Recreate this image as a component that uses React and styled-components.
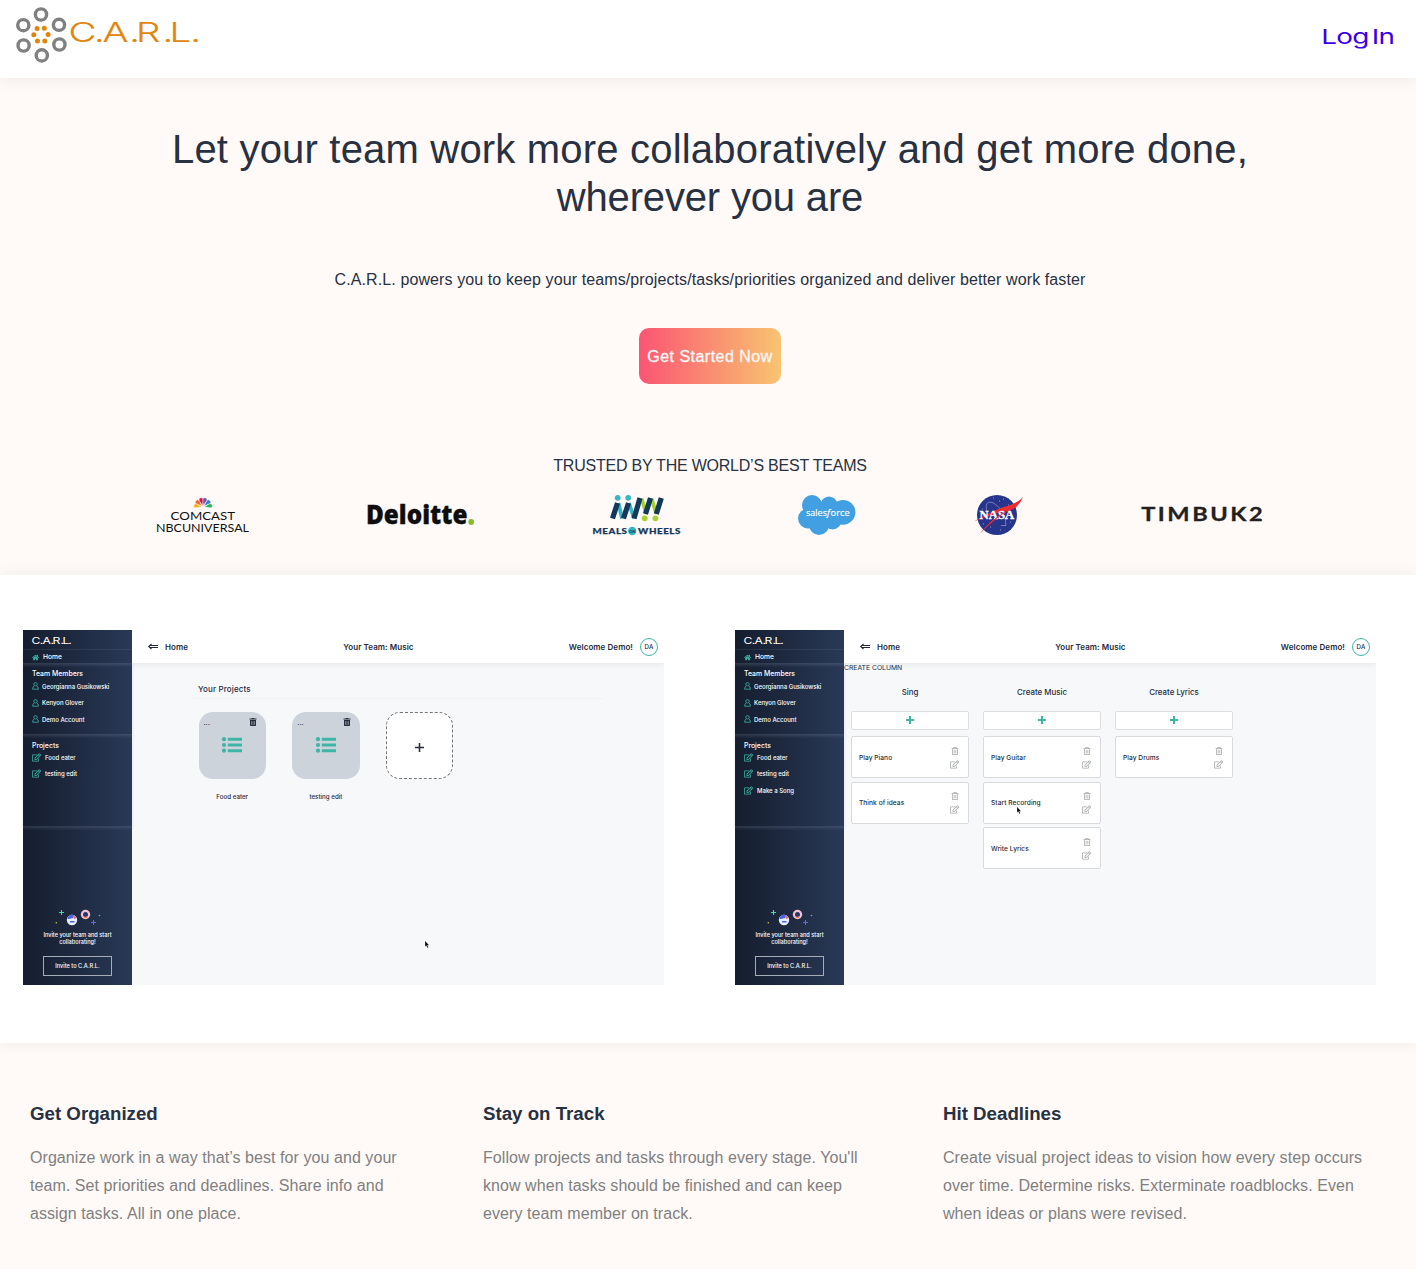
import React from 'react';
import styled, { createGlobalStyle } from 'styled-components';
import { FaHome, FaTrashAlt, FaRegTrashAlt, FaRegEdit } from 'react-icons/fa';

const Global = createGlobalStyle`
  *, *::before, *::after { box-sizing: border-box; }
  body { margin: 0; background: #fffaf8; font-family: "Liberation Sans", Arial, sans-serif; color: #273142; }
  h1, h2, h3, p { margin: 0; font-weight: 400; }
  svg { overflow: visible; }
`;

const teal = '#3eb5a6';

const Page = styled.div`
  height: 1269px;
  overflow: hidden;
`;

const Header = styled.header`
  position: relative;
  z-index: 1;
  height: 78px;
  display: flex;
  justify-content: space-between;
  background: #fff;
  box-shadow: 0 2px 15px rgba(60, 40, 40, 0.08);
`;

const LoginLink = styled.a`
  padding: 22px 20px 0 0;
  color: #3c00e6;
`;

const Hero = styled.section`
  height: 497px;
  padding-top: 47px;
  text-align: center;
  background: #fffaf8;
`;

const Headline = styled.h1`
  padding-left: 4px;
  font-size: 40px;
  line-height: 48px;
  white-space: nowrap;
`;

const HeadlineRow = styled.span`
  display: block;
  letter-spacing: ${(p) => p.$tracking}px;
`;

const Lead = styled.p`
  margin-top: 49px;
  padding-left: 4px;
  font-size: 16px;
  line-height: 20px;
  letter-spacing: 0.105px;
`;

const CallToAction = styled.button`
  display: block;
  width: 142px;
  height: 56px;
  margin: 38px auto 0;
  position: relative;
  left: 2px;
  padding: 2px 0 0;
  border: 0;
  border-radius: 10px;
  background: linear-gradient(90deg, #fb5572, #f8c471);
  color: #faf6f6;
  font: 16px "Liberation Sans", Arial, sans-serif;
  letter-spacing: 0.48px;
  -webkit-text-stroke: 0.35px #faf6f6;
`;

const Trusted = styled.h2`
  margin-top: 72px;
  padding-left: 4px;
  font-size: 16px;
  line-height: 20px;
  letter-spacing: -0.22px;
`;

const Clients = styled.div`
  display: flex;
  justify-content: space-between;
  height: 40px;
  margin: 19px 153px 0 156px;
`;

const Showcase = styled.section`
  position: relative;
  height: 468px;
  padding: 55px 40px 0 23px;
  display: flex;
  justify-content: space-between;
  background: #fff;
  box-shadow: 0 0 14px rgba(60, 50, 50, 0.08);
`;

const Features = styled.section`
  display: grid;
  grid-template-columns: 453px 460px 1fr;
  padding: 60px 0 0 30px;
`;

const FeatureTitle = styled.h3`
  font-size: 18.7px;
  font-weight: 700;
  line-height: 22px;
`;

const FeatureText = styled.p`
  margin-top: 19px;
  font-size: 16px;
  line-height: 28px;
  letter-spacing: 0.065px;
  color: #808080;
  white-space: pre;
`;

/* product preview */

const Window = styled.div`
  position: relative;
  display: flex;
  width: 641px;
  height: 355px;
  font-family: Inter, "Liberation Sans", sans-serif;
  background: #f7f8fa;
`;

const Sidebar = styled.aside`
  width: 109px;
  display: flex;
  flex-direction: column;
  color: #fff;
  background: linear-gradient(90deg, #151e2f, #1e2940 45%, #293956);
`;

const SideBlock = styled.div`
  height: ${(p) => p.$height}px;
  padding: ${(p) => p.$top}px 0 0 9px;
  border-bottom: 1px solid rgba(170, 185, 205, ${(p) => (p.$soft ? 0.08 : 0.14)});
  box-shadow: ${(p) => (p.$soft ? 'none' : '0 1px 3px rgba(150, 165, 190, 0.25)')};
`;

const SideTitle = styled.div`
  font-size: 6.9px;
  font-weight: 500;
  line-height: 9px;
`;

const SideItem = styled.div`
  display: flex;
  align-items: center;
  gap: ${(p) => p.$gap || 4}px;
  height: ${(p) => p.$height || 16.5}px;
  font-size: ${(p) => p.$size || 6}px;
  font-weight: 500;
  white-space: nowrap;
  svg { color: ${teal}; flex: none; }
`;

const ProjectList = styled.div`
  margin-top: -1px;
`;

const Invite = styled.div`
  margin-top: auto;
  padding-bottom: 9px;
  display: flex;
  flex-direction: column;
  align-items: center;
  text-align: center;
  font-size: 5.6px;
  font-weight: 500;
  line-height: 7px;
  white-space: nowrap;
`;

const InviteText = styled.div`
  margin-top: 5px;
`;

const InviteButton = styled.div`
  width: 69px;
  height: 20px;
  margin-top: 10px;
  border: 1px solid #a5acb8;
  line-height: 18px;
`;

const Main = styled.div`
  flex: 1;
  overflow: hidden;
  color: #252c3d;
`;

const TopBar = styled.div`
  height: 33px;
  padding: 0 6px 0 16px;
  display: flex;
  align-items: center;
  justify-content: space-between;
  background: #fff;
  box-shadow: 0 1px 6px rgba(40, 50, 70, 0.1);
  font-size: 8px;
  font-weight: 600;
  letter-spacing: 0.07px;
`;

const TopGroup = styled.div`
  display: flex;
  align-items: center;
  gap: 7px;
`;

const Avatar = styled.div`
  width: 18px;
  height: 18px;
  border: 1px solid ${teal};
  border-radius: 50%;
  text-align: center;
  font-size: 6.2px;
  font-weight: 500;
  line-height: 16px;
`;

const Projects = styled.div`
  margin: 20px 61px 0 61px;
`;

const ProjectsTitle = styled.div`
  height: 16px;
  padding-left: 5px;
  border-bottom: 1px solid #f0f2f4;
  font-size: 8px;
  font-weight: 500;
  line-height: 13px;
  letter-spacing: 0.14px;
`;

const Tiles = styled.div`
  display: flex;
  gap: 26.5px;
  padding: 13px 0 0 5.5px;
`;

const TileColumn = styled.div`
  width: 67.3px;
  text-align: center;
  font-size: 6.2px;
  font-weight: 500;
`;

const Tile = styled.div`
  height: 67.3px;
  margin-bottom: 14px;
  padding: 6px 9px 0 5px;
  border-radius: 14px;
  background: #ccd3da;
`;

const TileTop = styled.div`
  display: flex;
  justify-content: space-between;
  height: 18.5px;
  font-size: 7px;
`;

const TileIcon = styled.svg`
  display: block;
  margin: 0 0 0 18.5px;
`;

const AddTile = styled.div`
  height: 67.3px;
  padding-top: 4px;
  display: grid;
  place-items: center;
  border: 1px dashed #777;
  border-radius: 14px;
  background: #fff;
`;

const CreateColumn = styled.div`
  position: relative;
  height: 9px;
  font-size: 6.8px;
  line-height: 9px;
`;

const Board = styled.div`
  display: flex;
  align-items: flex-start;
  gap: 14px;
  padding: 15px 0 0 7px;
`;

const Column = styled.div`
  width: 118px;
  display: flex;
  flex-direction: column;
  gap: 3.5px;
`;

const ColumnTitle = styled.div`
  height: 20.4px;
  text-align: center;
  font-size: 7.9px;
  font-weight: 500;
  line-height: 10px;
`;

const AddBar = styled.div`
  height: 19px;
  margin-bottom: 3px;
  display: grid;
  place-items: center;
  border: 1px solid #dcdee0;
  border-radius: 2px;
  background: #fff;
`;

const Card = styled.div`
  height: 42px;
  padding: 1px 9px 0 7px;
  display: flex;
  align-items: center;
  justify-content: space-between;
  border: 1px solid #d8dadd;
  border-radius: 2px;
  background: #fff;
  font-size: 6.6px;
  font-weight: 500;
  letter-spacing: 0.05px;
`;

const CardTools = styled.div`
  display: flex;
  flex-direction: column;
  align-items: center;
  gap: 5px;
  color: #a6a9ac;
`;

const Pointer = styled.svg`
  position: absolute;
  left: ${(p) => p.$x}px;
  top: ${(p) => p.$y}px;
`;

const MiniWordmark = styled.svg`
  display: block;
`;

const Cursor = ({ x, y }) => (
  <Pointer $x={x} $y={y} width="6" height="9" viewBox="0 0 6 9">
    <path d="M1 .7v6l1.3-1.2L3.4 8l1-.5-1-2.2h1.7z" fill="#000" stroke="#fff" strokeWidth=".3" />
  </Pointer>
);

const Plus = ({ color = '#252c3d', size = 8, weight = 2 }) => (
  <svg width={size} height={size} viewBox="0 0 8 8"><path d="M4 0v8M0 4h8" stroke={color} strokeWidth={weight} /></svg>
);

const ListIcon = () => (
  <TileIcon width="20" height="16" viewBox="0 0 20 16" fill={teal}>
    <circle cx="2" cy="2.2" r="2.1" /><circle cx="2" cy="8" r="2.1" /><circle cx="2" cy="13.7" r="2.1" />
    <path d="M5.8.8H20v2.9H5.800zM5.8 6.6H20v2.9H5.800zM5.8 12.3H20v2.9H5.800z" />
  </TileIcon>
);

const UserIcon = () => (
  <svg width="7" height="8" viewBox="0 0 7 8" fill="none" stroke="currentColor" strokeWidth=".8">
    <circle cx="3.5" cy="2.3" r="1.7" /><path d="M2.300 3.800Q.7 4.500.6 7.200h5.800Q6.300 4.500 4.700 3.800" />
  </svg>
);

const rings = [[41, 14.5], [59, 24.8], [59.4, 44.5], [41.8, 55.4], [23.6, 45.5], [23.3, 25.2]];
const dots = [[37.1, 28.5], [44.3, 28.3], [48.1, 34.5], [44.8, 41], [37.5, 41], [33.8, 34.8]];
const stretch = (list, scale) => list.map((x) => (x / scale).toFixed(2)).join(' ');

const Brand = () => (
  <svg width="210" height="70">
    {rings.map(([x, y]) => <circle key={`${x}${y}`} cx={x} cy={y} r="5.6" fill="none" stroke="#808080" strokeWidth="3.4" />)}
    {dots.map(([x, y]) => <circle key={`${x}${y}`} cx={x} cy={y} r="2.5" fill="#e1850f" />)}
    <text transform="scale(1.4 1)" x={stretch([68.4, 94, 102.5, 129.2, 136, 162.5, 169.5, 190.2], 1.4)} y="41.8" fontFamily="Inter, sans-serif" fontWeight="300" fontSize="27.5" fill="#e1850f" stroke="#e1850f" strokeWidth=".15">C.A.R.L.</text>
  </svg>
);

const petals = [['#fbb41a', 39.7, 11, -80], ['#f06a28', 41.3, 6.6, -48], ['#d2144b', 45, 4.6, -14], ['#7357a8', 49, 4.6, 14], ['#2f7fd3', 52.7, 6.6, 48], ['#22b455', 54.3, 11, 80]];

const Comcast = () => (
  <svg width="93" height="40">
    {petals.map(([fill, x, y, a]) => (
      <path key={fill} transform={`translate(${47 + (x - 47) * 0.25} ${y * 0.25 + 9}) rotate(${a})`} d="M0 .5L-2-5a2.05 2.05 0 1 1 4 0z" fill={fill} stroke="#fffaf8" strokeWidth=".4" />
    ))}
    <g fontFamily="Lato, sans-serif" fill="#111">
      <text x="14.6" y="25" fontSize="12" textLength="64.5" lengthAdjust="spacingAndGlyphs">COMCAST</text>
      <text x="0" y="37" fontSize="12" textLength="93" lengthAdjust="spacingAndGlyphs">NBCUNIVERSAL</text>
    </g>
  </svg>
);

const Deloitte = () => (
  <svg width="107" height="40">
    <text x="-1" y="29.2" fontFamily="Open Sans, sans-serif" fontWeight="800" fontSize="26" fill="#0e0e0e" stroke="#0e0e0e" strokeWidth=".3" textLength="101.5" lengthAdjust="spacingAndGlyphs">Deloitte</text>
    <circle cx="104.2" cy="27" r="2.9" fill="#86bc25" />
  </svg>
);

const MealsOnWheels = () => (
  <svg width="87" height="40">
    <path d="M25.5 8L29 23.5M36 8L41 23.5" stroke="#39b6c3" strokeWidth="3.8" />
    <path d="M48.5 3.5L53.5 19M58.5 3.5L63.5 19" stroke="#a4d233" strokeWidth="3.8" />
    <path d="M24.5 8l-5 15.5M35.5 8l-5 15.5M47 3l-6 20.5M57.5 3l-5 16M68.3 3l-5 16" stroke="#12395b" strokeWidth="5.2" />
    <g fill="#39b6c3"><circle cx="24.7" cy="2.8" r="2.9" /><circle cx="35.2" cy="2.8" r="2.9" /><circle cx="39.2" cy="36" r="4.2" /></g>
    <g fill="#a4d233"><circle cx="51.7" cy="23.3" r="2.9" /><circle cx="62.4" cy="23.3" r="2.9" /></g>
    <g fontFamily="Lato, sans-serif" fontWeight="900" fontSize="8.2" letterSpacing=".5" fill="#12395b" stroke="#12395b" strokeWidth=".25">
      <text x="-.5" y="39" textLength="35" lengthAdjust="spacingAndGlyphs">MEALS</text>
      <text x="45" y="39" textLength="43" lengthAdjust="spacingAndGlyphs">WHEELS</text>
      <text x="36" y="37.5" fontSize="4" letterSpacing="0" stroke="none">ON</text>
    </g>
  </svg>
);

const Salesforce = () => (
  <svg width="58" height="40">
    <g fill="#419fe2">
      <circle cx="14" cy="10" r="10" /><circle cx="31" cy="10" r="8.6" /><circle cx="45" cy="17.3" r="12.4" />
      <circle cx="10" cy="23.5" r="10" /><circle cx="21" cy="30" r="10" /><circle cx="34.5" cy="25.5" r="9" />
      <path d="M10 8h30v20H12z" />
    </g>
    <g fontFamily="Open Sans, sans-serif" fontSize="9.5" fill="#fff" stroke="#fff" strokeWidth=".15">
      <text x="8" y="21.3" textLength="21" lengthAdjust="spacingAndGlyphs">sales</text>
      <text x="29" y="21.3" fontStyle="italic">f</text>
      <text x="32.6" y="21.3" textLength="19" lengthAdjust="spacingAndGlyphs">orce</text>
    </g>
  </svg>
);

const Nasa = () => (
  <svg width="48" height="40">
    <circle cx="22" cy="20" r="20" fill="#27348b" />
    <path d="M12 17C10 9 12 6 17 7.500s11 9 13 15l1 8h-5" fill="none" stroke="#a8b0dc" strokeWidth=".6" />
    <path d="M7 14h1M18 3h1M24 6h1M33 10h1M8 29h1M15 32h1M25 35h1M35 27h1M28 4h1" stroke="#8f9ad0" />
    <path d="M-1 26.5Q20 14 34 10.5Q44 7 48 2Q46 8 40 13Q22 20 5 38.5Q17 23 33 15.5Q17 19-1 26.500z" fill="#ee2b2f" />
    <text x="4.6" y="24" fontFamily="Liberation Serif, serif" fontWeight="700" fontSize="11.5" fill="#fff" stroke="#fff" strokeWidth=".3" textLength="34.5" lengthAdjust="spacingAndGlyphs">NASA</text>
    <path d="M5 38.5Q17 23 33 15.5L37 13.5Q20 23 5 38.500z" fill="#ee2b2f" />
  </svg>
);

const Timbuk = () => (
  <svg width="122" height="40">
    <text x=".2" y="26" fontFamily="Lato, sans-serif" fontWeight="700" fontSize="18.8" fill="#231f20" stroke="#231f20" strokeWidth=".3" letterSpacing="2" textLength="124" lengthAdjust="spacingAndGlyphs">TIMBUK2</text>
  </svg>
);

const InviteArt = () => (
  <svg width="48" height="18" viewBox="0 0 48 18">
    <path d="M7.5 1v5M5 3.5h5" stroke="#46dcae" strokeWidth="1" />
    <path d="M39.5 11v5M37 13.5h5" stroke="#7c5cf0" strokeWidth="1" />
    <circle cx="2.3" cy="13.8" r=".8" fill="#d8c23a" /><circle cx="45.5" cy="6.5" r=".8" fill="#4cb4f0" />
    <circle cx="18" cy="11" r="5.2" fill="#e9edff" /><path d="M13.500 10a4.500 4.500 0 0 1 6.500-4l-1 3-4 1zM16 12h4.500v1.500H16z" fill="#4968dd" /><circle cx="20.8" cy="8.5" r="1.4" fill="#ee6874" />
    <circle cx="31.5" cy="5.5" r="4.7" fill="#f0c3d2" /><circle cx="31.5" cy="5.5" r="2.5" fill="#29366c" /><path d="M30 8.5h3" stroke="#f18b54" strokeWidth="1.4" />
  </svg>
);

const BackArrow = () => (
  <svg width="10" height="7" viewBox="0 0 10 7" fill="none" stroke="#252c3d" strokeWidth="1.1"><path d="M3.500 1L.7 3.500l2.800 2.500M2 2.500h8M2 4.500h8" /></svg>
);

const SideNav = ({ projects }) => (
  <Sidebar>
    <SideBlock $height={20} $top={6} $soft>
      <MiniWordmark width="41" height="9">
        <text transform="scale(1.35 1)" x={stretch([-0.6, 7.8, 10.6, 18.4, 20.6, 28.4, 30.4, 36.2], 1.35)} y="7.5" fontFamily="Inter, sans-serif" fontWeight="400" fontSize="9" fill="#fff">C.A.R.L.</text>
      </MiniWordmark>
    </SideBlock>
    <SideBlock $height={14} $top={0}><SideItem $height={14} $size={6.7}><FaHome size={7} />Home</SideItem></SideBlock>
    <SideBlock $height={71} $top={5}>
      <SideTitle>Team Members</SideTitle>
      <SideItem $gap={3}><UserIcon />Georgianna Gusikowski</SideItem>
      <SideItem $gap={3}><UserIcon />Kenyon Glover</SideItem>
      <SideItem $gap={3}><UserIcon />Demo Account</SideItem>
    </SideBlock>
    <SideBlock $height={92} $top={6}>
      <SideTitle>Projects</SideTitle>
      <ProjectList>
        {projects.map((p) => <SideItem key={p}><FaRegEdit size={9} />{p}</SideItem>)}
      </ProjectList>
    </SideBlock>
    <Invite>
      <InviteArt />
      <InviteText>Invite your team and start<br />collaborating!</InviteText>
      <InviteButton>Invite to C.A.R.L.</InviteButton>
    </Invite>
  </Sidebar>
);

const PreviewBar = () => (
  <TopBar>
    <TopGroup><BackArrow />Home</TopGroup>
    <div>Your Team: Music</div>
    <TopGroup>Welcome Demo!<Avatar>DA</Avatar></TopGroup>
  </TopBar>
);

const ProjectTile = ({ name }) => (
  <TileColumn>
    <Tile>
      <TileTop><span>...</span><FaTrashAlt size={8} /></TileTop>
      <ListIcon />
    </Tile>
    {name}
  </TileColumn>
);

const columns = [
  ['Sing', ['Play Piano', 'Think of ideas']],
  ['Create Music', ['Play Guitar', 'Start Recording', 'Write Lyrics']],
  ['Create Lyrics', ['Play Drums']],
];

const features = [
  ['Get Organized', 'Organize work in a way that’s best for you and your\nteam. Set priorities and deadlines. Share info and\nassign tasks. All in one place.'],
  ['Stay on Track', "Follow projects and tasks through every stage. You'll\nknow when tasks should be finished and can keep\nevery team member on track."],
  ['Hit Deadlines', 'Create visual project ideas to vision how every step occurs\nover time. Determine risks. Exterminate roadblocks. Even\nwhen ideas or plans were revised.'],
];

export default function App() {
  return (
    <Page>
      <Global />
      <Header>
        <Brand />
        <LoginLink>
          <svg width="74" height="30">
            <text transform="scale(1.36 1)" x={stretch([-0.8, 14.3, 30.2, 46, 49.8, 56.4], 1.36)} y="22" fontFamily="Inter, sans-serif" fontSize="20.5" fill="currentColor">Log In</text>
          </svg>
        </LoginLink>
      </Header>
      <Hero>
        <Headline>
          <HeadlineRow $tracking={0.19}>Let your team work more collaboratively and get more done,</HeadlineRow>
          <HeadlineRow $tracking={-0.17}>wherever you are</HeadlineRow>
        </Headline>
        <Lead>C.A.R.L. powers you to keep your teams/projects/tasks/priorities organized and deliver better work faster</Lead>
        <CallToAction>Get Started Now</CallToAction>
        <Trusted>TRUSTED BY THE WORLD’S BEST TEAMS</Trusted>
        <Clients><Comcast /><Deloitte /><MealsOnWheels /><Salesforce /><Nasa /><Timbuk /></Clients>
      </Hero>
      <Showcase>
        <Window>
          <SideNav projects={['Food eater', 'testing edit']} />
          <Main>
            <PreviewBar />
            <Projects>
              <ProjectsTitle>Your Projects</ProjectsTitle>
              <Tiles>
                <ProjectTile name="Food eater" />
                <ProjectTile name="testing edit" />
                <TileColumn><AddTile><Plus size={9} weight={1.4} /></AddTile></TileColumn>
              </Tiles>
            </Projects>
          </Main>
          <Cursor x={401} y={310} />
        </Window>
        <Window>
          <SideNav projects={['Food eater', 'testing edit', 'Make a Song']} />
          <Main>
            <PreviewBar />
            <CreateColumn>CREATE COLUMN</CreateColumn>
            <Board>
              {columns.map(([title, cards]) => (
                <Column key={title}>
                  <ColumnTitle>{title}</ColumnTitle>
                  <AddBar><Plus color={teal} weight={2.2} /></AddBar>
                  {cards.map((c) => (
                    <Card key={c}>{c}<CardTools><FaRegTrashAlt size={8} /><FaRegEdit size={9} /></CardTools></Card>
                  ))}
                </Column>
              ))}
            </Board>
          </Main>
          <Cursor x={281} y={176} />
        </Window>
      </Showcase>
      <Features>
        {features.map(([title, text]) => (
          <article key={title}>
            <FeatureTitle>{title}</FeatureTitle>
            <FeatureText>{text}</FeatureText>
          </article>
        ))}
      </Features>
    </Page>
  );
}
